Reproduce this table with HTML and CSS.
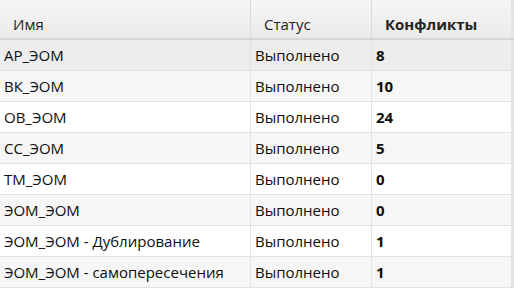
FILE: index.html
```html
<!DOCTYPE html>
<html lang="ru">
<head>
<meta charset="utf-8">
<link rel="stylesheet" href="styles.css">
</head>
<body>
<div class="grid">
  <div class="row head">
    <div class="cell c1">Имя</div>
    <div class="cell c2">Статус</div>
    <div class="cell c3 bold">Конфликты</div>
  </div>
  <div class="row sel">
    <div class="cell c1">AP_ЭОМ</div>
    <div class="cell c2">Выполнено</div>
    <div class="cell c3 bold">8</div>
  </div>
  <div class="row alt">
    <div class="cell c1">ВК_ЭОМ</div>
    <div class="cell c2">Выполнено</div>
    <div class="cell c3 bold">10</div>
  </div>
  <div class="row">
    <div class="cell c1">ОВ_ЭОМ</div>
    <div class="cell c2">Выполнено</div>
    <div class="cell c3 bold">24</div>
  </div>
  <div class="row alt">
    <div class="cell c1">СС_ЭОМ</div>
    <div class="cell c2">Выполнено</div>
    <div class="cell c3 bold">5</div>
  </div>
  <div class="row">
    <div class="cell c1">ТМ_ЭОМ</div>
    <div class="cell c2">Выполнено</div>
    <div class="cell c3 bold">0</div>
  </div>
  <div class="row alt">
    <div class="cell c1">ЭОМ_ЭОМ</div>
    <div class="cell c2">Выполнено</div>
    <div class="cell c3 bold">0</div>
  </div>
  <div class="row">
    <div class="cell c1">ЭОМ_ЭОМ - Дублирование</div>
    <div class="cell c2">Выполнено</div>
    <div class="cell c3 bold">1</div>
  </div>
  <div class="row alt">
    <div class="cell c1">ЭОМ_ЭОМ - самопересечения</div>
    <div class="cell c2">Выполнено</div>
    <div class="cell c3 bold">1</div>
  </div>
</div>
</body>
</html>
```
FILE: styles.css
```css
html, body {
  margin: 0;
  padding: 0;
  background: #ffffff;
}
body {
  width: 514px;
  height: 288px;
  overflow: hidden;
  font-family: "Open Sans", "Noto Sans", sans-serif;
  font-size: 15px;
  color: #0e0e0e;
}
.grid {
  display: flex;
  flex-direction: column;
  width: 514px;
}
.row {
  display: grid;
  grid-template-columns: 251px 121px 139px 3px;
  height: 31px;
  border-bottom: 1px solid #e2e2e2;
  box-sizing: border-box;
  background: #ffffff;
}
.row::after {
  content: "";
  background: #e4e4e4;
}
.row.alt { background: #f6f6f6; }
.row.sel { background: #ededed; }
.row.head {
  height: 40px;
  background: linear-gradient(#f5f5f5, #ebebeb);
  border-bottom: 2px solid #d6d6d6;
  color: #222222;
}
.row.head .cell {
  padding-left: 13px;
  padding-top: 9px;
}
.cell {
  display: flex;
  align-items: center;
  padding-left: 4px;
  border-right: 1px solid #e2e2e2;
  white-space: nowrap;
  overflow: hidden;
}
.row.head .cell { border-right-color: #d9d9d9; }
.c3 { border-right: none; }
.bold { font-weight: 700; }
```
